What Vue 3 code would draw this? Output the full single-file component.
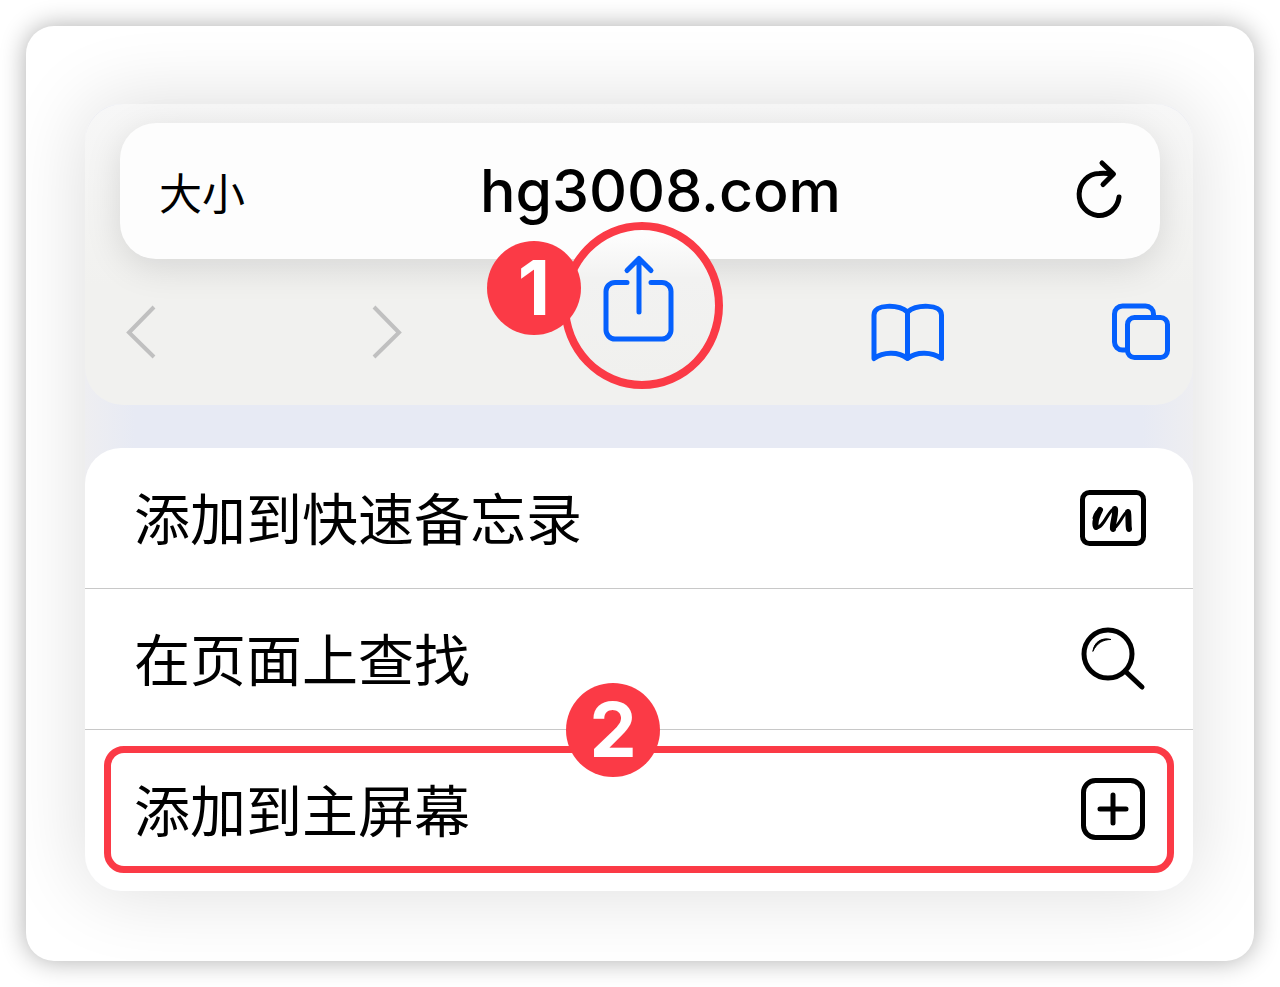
<template>
  <main class="card">
    <div class="guide">
      <section class="browser" aria-label="Safari">
        <form class="address" @submit.prevent>
          <button type="button" class="text-size">大小</button>
          <input v-model="url" class="url" type="text" aria-label="网址" spellcheck="false" />
          <button type="button" class="reload" aria-label="重新载入">
            <svg width="48" height="60" viewBox="0 0 48 60" class="line">
              <path d="M43 36A20 21 0 1 1 23 12.500Q30 12 36 13" />
              <path d="M26 2 37.500 13 27 23.500" />
            </svg>
          </button>
        </form>

        <nav class="toolbar" aria-label="工具栏">
          <button type="button" class="muted" aria-label="后退" disabled>
            <svg width="30" height="52" viewBox="0 0 30 52">
              <path d="M28 1 3 26.500 28 51" />
            </svg>
          </button>
          <button type="button" class="muted" aria-label="前进" disabled>
            <svg width="30" height="52" viewBox="0 0 30 52">
              <path d="M2 1 27 26.500 2 51" />
            </svg>
          </button>
          <div class="share">
            <span class="ring"></span>
            <button type="button" class="blue" aria-label="分享">
              <svg width="72" height="88" viewBox="0 0 72 88">
                <path d="M24 27.500H12A9 9 0 0 0 3 36.500V75A9 9 0 0 0 12 84H59A9 9 0 0 0 68 75V36.500A9 9 0 0 0 59 27.500H48" />
                <path d="M36 57V4M24 15.500 36 3.500 48 15.500" />
              </svg>
            </button>
            <span class="badge badge-share">1</span>
          </div>
          <button type="button" class="blue" aria-label="书签">
            <svg width="74" height="58" viewBox="0 0 74 58">
              <path d="M3 55.500V12C3 1 27 1 36.500 9 46 1 70.500 1 70.500 12V55.500C61 49 46 48 36.500 55.500 27 48 12 49 3 55.500ZM36.500 9V55" />
            </svg>
          </button>
          <button type="button" class="blue" aria-label="标签页">
            <svg width="60" height="58" viewBox="0 0 60 58">
              <rect x="16.500" y="14.500" width="40" height="40" rx="7" />
              <path d="M42.500 14V11A8 8 0 0 0 34.500 3H11.500A8 8 0 0 0 3.500 11V39A8 8 0 0 0 11.500 47H16" />
            </svg>
          </button>
        </nav>
      </section>

      <ul class="sheet">
        <li v-for="item in actions" :key="item.id" class="action" :class="{ highlighted: item.step }">
          <button type="button" class="action-button">
            <span class="label">{{ item.label }}</span>
            <svg v-if="item.id === 'memo'" width="68" height="64" viewBox="0 0 68 64" class="line">
              <rect x="3.500" y="6.500" width="61" height="51" rx="7" />
              <path class="thin" d="M15 32C16 27 19 24 21 24M17 42C25 42 29 24 36 22M33 43C40 42 43 28 49 25" />
              <path class="thick" d="M21 24C18 30 15 36 17 41M36 23C37 30 33 38 34 43M49 26C50 32 49 38 50 43" />
            </svg>
            <svg v-else-if="item.id === 'find'" width="68" height="64" viewBox="0 0 68 64" class="line">
              <circle cx="29" cy="27" r="24" />
              <path d="M46 44 63 60" />
              <path class="glint" d="M14 24C15 15 23 10 32 12.500 24 12.500 18 16 14 24Z" />
            </svg>
            <svg v-else width="68" height="64" viewBox="0 0 68 64" class="line">
              <rect x="4.500" y="2.500" width="59" height="57" rx="12" />
              <path d="M34 17V45M21 31H47" />
            </svg>
          </button>
          <span v-if="item.step" class="badge badge-action">{{ item.step }}</span>
        </li>
      </ul>
    </div>
  </main>
</template>

<script setup>
import { ref } from "vue";

const url = ref("hg3008.com");

const actions = [
  { id: "memo", label: "添加到快速备忘录" },
  { id: "find", label: "在页面上查找" },
  { id: "home", label: "添加到主屏幕", step: 2 },
];
</script>

<style>
body {
  background: #fff;
}
</style>

<style scoped>
.card {
  margin: 26px;
  padding: 78px 61px 70px 59px;
  border-radius: 28px;
  background: #fff;
  box-shadow: 0 0 26px rgba(0, 0, 0, 0.32);
  overflow: hidden;
  color: #000;
  font-family: "Noto Sans CJK SC", sans-serif;
}
button {
  padding: 0;
  border: 0;
  background: none;
  color: inherit;
  font: inherit;
  cursor: pointer;
}
svg {
  display: block;
  overflow: visible;
  fill: none;
  stroke: currentColor;
}
.guide {
  display: flex;
  flex-direction: column;
  gap: 43px;
  border-radius: 36px;
  background: linear-gradient(90deg, #eeeef1, #e7eaf4 50px, #e7eaf4 calc(100% - 50px), #eeeef1);
  box-shadow: 0 0 80px rgba(0, 0, 0, 0.14);
}
.browser {
  padding: 19px 0 0;
  border-radius: 38px;
  background: linear-gradient(#f7f7f7, #f1f1ef 60%);
}
.address {
  display: flex;
  align-items: center;
  height: 136px;
  margin: 0 33px 0 35px;
  padding: 0 36px 0 39px;
  border-radius: 36px;
  background: #fdfdfd;
  box-shadow: 0 8px 36px rgba(0, 0, 0, 0.12);
}
.text-size {
  font-size: 43px;
  line-height: 60px;
}
.url {
  flex: 1;
  min-width: 0;
  padding: 0;
  border: 0;
  outline: 0;
  background: none;
  color: inherit;
  font-family: Inter, sans-serif;
  font-size: 59px;
  font-weight: 500;
  line-height: 76px;
  text-align: center;
}
.toolbar {
  display: grid;
  grid-template-columns: 246fr 231fr 268fr 240fr 60px;
  align-items: center;
  justify-items: start;
  height: 146px;
  padding: 0 22px 0 41px;
}
.muted {
  color: #c0c0c0;
  stroke-width: 4px;
}
.blue {
  color: #0560fd;
  stroke-width: 5px;
  stroke-linecap: round;
  stroke-linejoin: round;
}
.line {
  stroke-width: 5px;
  stroke-linecap: round;
  stroke-linejoin: round;
}
.thin {
  stroke-width: 3px;
}
.thick {
  stroke-width: 6px;
}
.glint {
  fill: currentColor;
  stroke-width: 1px;
}
.share {
  position: relative;
  z-index: 0;
  align-self: start;
  margin-top: -4px;
}
.ring {
  position: absolute;
  z-index: -1;
  top: -33px;
  left: -42px;
  box-sizing: border-box;
  width: 162px;
  height: 167px;
  border: 8px solid #fb3a46;
  border-radius: 50%;
  background: linear-gradient(#fdfdfd 4%, #f2f2f1 32%, #f0f0ee);
}
.badge {
  position: absolute;
  width: 94px;
  border-radius: 50%;
  background: #fb3a46;
  color: #fff;
  font-family: Inter, sans-serif;
  font-size: 75px;
  font-weight: 700;
  line-height: 94px;
  text-align: center;
}
.badge-share {
  top: -14px;
  left: -116px;
}
.badge-action {
  top: -47px;
  left: calc(50% - 73px);
}
.sheet {
  margin: 0;
  padding: 0;
  border-radius: 36px;
  background: #fff;
  list-style: none;
}
.action {
  position: relative;
}
.action + .action {
  border-top: 1px solid #c8c8c8;
}
.action-button {
  display: flex;
  align-items: center;
  justify-content: space-between;
  width: 100%;
  height: 140px;
  padding: 0 46px 0 49px;
  font-size: 56px;
  line-height: 80px;
}
.label {
  padding-bottom: 4px;
}
.highlighted {
  padding: 16px 19px 18px;
}
.highlighted .action-button {
  height: 127px;
  padding: 0 20px 0 23px;
  border: 7px solid #fb3a46;
  border-radius: 20px;
}
</style>
